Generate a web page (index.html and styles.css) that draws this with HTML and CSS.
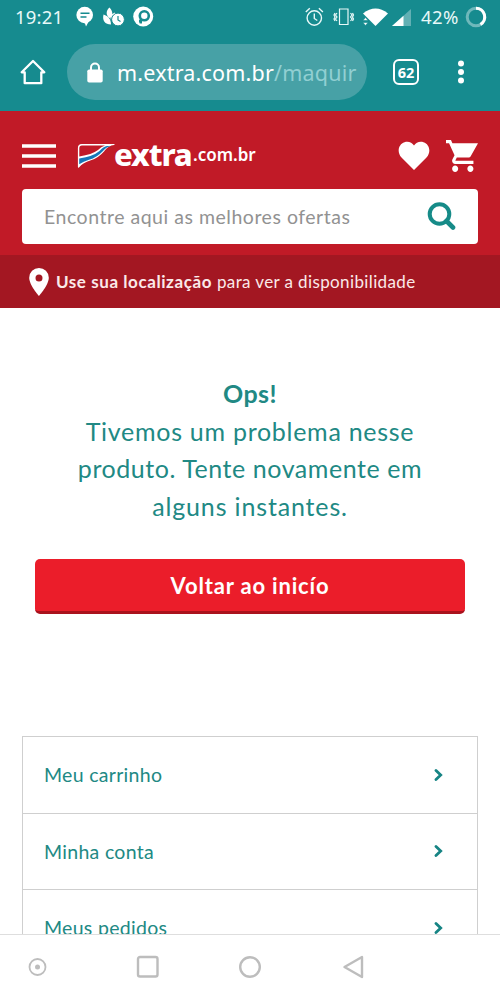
FILE: index.html
```
<!DOCTYPE html>
<html lang="pt-BR">
<head>
<meta charset="utf-8">
<title>Extra.com.br</title>
<link rel="stylesheet" href="styles.css">
</head>
<body>
<div class="phone">
  <div class="chrome">
    <div class="status">
      <span class="time">19:21</span>
      <svg class="notices" width="78" height="22" viewBox="0 0 78 22" fill="#fff">
        <circle cx="8.700" cy="9" r="8.300"/><path d="M5 15h8l-3 5.500-1-3z"/>
        <path d="M4.500 7.200h9M4.500 11h6" stroke="#168b8f" stroke-width="1.400"/>
        <path d="M33.500 1.500c-4 3.500-3.500 8 0 10.500 3-1 4.500-5.500 0-10.500zM27.500 8.500c-1.500 6 1.500 10 7.500 10 0-5-2.500-8.500-7.500-10zM39 6.500c-3 1-4.500 3.500-4.500 7l5-3z"/>
        <circle cx="42" cy="13.500" r="6.400" stroke="#168b8f"/><path d="M42 10v4l2.500 1.500" fill="none" stroke="#168b8f" stroke-width="1.200"/>
        <circle cx="67.200" cy="10.500" r="10"/><circle cx="68.300" cy="9.800" r="4.500" fill="none" stroke="#168b8f" stroke-width="2.600"/><path d="M64.800 13v4.500M63 15.300h2" stroke="#168b8f" stroke-width="2.400"/>
      </svg>
      <svg class="signals" width="108" height="22" viewBox="0 0 108 22" fill="none" stroke="#e8f8f8" stroke-width="1.400">
        <circle cx="9.300" cy="12" r="7.200"/><path d="M9.300 7.500v5l3 2M.8 6l4-3.800M17.900 6l-4-3.800"/>
        <path d="M34.500 3h8.500v15.500h-8.500zM32 7l-1.500 2 1.500 2-1.500 2 1.500 2M45.500 7l1.500 2-1.500 2 1.500 2-1.500 2M30 7l-1 2 1 2-1 2 1 2M47.500 7l1 2-1 2 1 2-1 2" stroke-width="1.200"/>
        <path d="M58 7.500q12.500-10 25 0L70.500 20z" fill="#fff" stroke="none"/>
        <path d="M58 14.500l2.500-3 2.500 3zM58 16.500l2.500 3 2.500-3z" fill="#fff" stroke="#168b8f" stroke-width=".6"/>
        <path d="M106 3v17H87z" fill="#62b0b4" stroke="none"/><path d="M98.500 9.700V20H87z" fill="#fff" stroke="none"/>
      </svg>
      <span class="battery">42%</span>
      <svg class="ring" width="22" height="22" viewBox="0 0 22 22" fill="none" stroke-width="3"><circle cx="11" cy="11" r="8.800" stroke="#6fb8bb"/><path d="M11 2.200a8.800 8.800 0 0 1 4.500 16.300" stroke="#fff"/></svg>
    </div>
    <div class="toolbar">
      <svg width="26" height="26" viewBox="0 0 26 26" fill="none" stroke="#fff" stroke-width="2.300" stroke-linejoin="round" stroke-linecap="round"><path d="M1.700 13.300L13 2l11.300 11.300h-3v10.900H4.700V13.300z"/></svg>
      <div class="address">
        <svg width="16" height="21" viewBox="0 0 16 21"><rect x=".3" y="7.500" width="15.400" height="13" rx="1.800" fill="#fff"/><path d="M4 8V5.500a4 4 0 0 1 8 0V8" fill="none" stroke="#fff" stroke-width="2"/></svg>
        <span class="url">m.extra.com.br<span class="path">/maquir</span></span>
      </div>
      <span class="tabs">62</span>
      <svg class="dots" width="8" height="24" viewBox="0 0 8 24" fill="#fff"><circle cx="4" cy="3.500" r="3"/><circle cx="4" cy="12" r="3"/><circle cx="4" cy="20.500" r="3"/></svg>
    </div>
  </div>

  <header class="header">
    <div class="brandbar">
      <svg width="34" height="24" viewBox="0 0 34 24" stroke="#fff" stroke-width="3.600"><path d="M0 2h34M0 12h34M0 22h34"/></svg>
      <div class="logo">
        <svg width="38" height="26" viewBox="0 0 38 26"><path d="M1.500 24V5q0-3.500 3.500-3.500h32q-6 .5-10 6-6 7-14 9.500-7 2-11.500 7z" fill="#fff" stroke="#fff" stroke-width="1.200" stroke-linejoin="round"/><path d="M2.300 13.500V5.200q0-2.700 2.700-2.700h23q-4 1-7 4.500-6 4.500-18.700 6.500z" fill="#c11a27"/><path d="M2.200 15.500Q16 13.500 22.500 8q4-4.500 7.500-5h4q-5 1-8 5-6 6.500-14 8.800-5.500 1.700-9.800 4.500z" fill="#1677b8"/></svg>
        <span class="name">extra</span><span class="domain">.com.br</span>
      </div>
      <svg class="heart" width="32" height="30" viewBox="0 0 32 30" fill="#fff"><path d="M16 29L3.500 16.500C-1.500 11 .5 3 6.500 1.200 10.500 0 14 1.500 16 4.500 18 1.500 21.500 0 25.500 1.200 31.500 3 33.500 11 28.500 16.500z"/></svg>
      <svg width="32" height="32" viewBox="1 2 21 20" preserveAspectRatio="none" fill="#fff"><path d="M7 18c-1.100 0-1.990.9-1.990 2S5.900 22 7 22s2-.9 2-2-.9-2-2-2zM1 2v2h2l3.600 7.590-1.350 2.450c-.16.28-.25.610-.25.960 0 1.100.9 2 2 2h12v-2H7.420c-.14 0-.25-.11-.25-.25l.03-.12.900-1.630h7.450c.75 0 1.410-.41 1.750-1.030L22 4H5.210l-.94-2H1zm16 16c-1.100 0-1.990.9-1.990 2s.89 2 1.990 2 2-.9 2-2-.9-2-2-2z"/></svg>
    </div>
    <div class="search">
      <span class="hint">Encontre aqui as melhores ofertas</span>
      <svg width="29" height="29" viewBox="0 0 29 29" fill="none" stroke="#168b88"><circle cx="12.500" cy="12" r="9.800" stroke-width="4"/><path d="M19.500 19l6.500 6.500" stroke-width="4.600" stroke-linecap="round"/></svg>
    </div>
  </header>
  <div class="location">
    <svg width="20" height="28" viewBox="0 0 20 28"><path fill="#fff" fill-rule="evenodd" d="M10 0a9.800 9.800 0 0 0-9.800 9.800C.2 17 10 28 10 28s9.800-11 9.800-18.200A9.800 9.800 0 0 0 10 0zm0 6.500a3.500 3.500 0 1 1 0 7 3.500 3.500 0 0 1 0-7z"/></svg>
    <span><b>Use sua localização</b> <span class="reason">para ver a disponibilidade</span></span>
  </div>

  <main class="content">
    <p class="message"><b>Ops!</b><br><span class="l1">Tivemos um problema nesse</span><br><span class="l2">produto. Tente novamente em</span><br><span class="l3">alguns instantes.</span></p>
    <div class="button">Voltar ao inicío</div>
    <nav class="links">
      <div class="link"><span>Meu carrinho</span><svg width="10" height="12" viewBox="0 0 10 12"><path d="M2 1.500L6.700 6 2 10.500" /></svg></div>
      <div class="link"><span>Minha conta</span><svg width="10" height="12" viewBox="0 0 10 12"><path d="M2 1.500L6.700 6 2 10.500" /></svg></div>
      <div class="link"><span>Meus pedidos</span><svg width="10" height="12" viewBox="0 0 10 12"><path d="M2 1.500L6.700 6 2 10.500" /></svg></div>
    </nav>
  </main>

  <div class="navbar">
    <svg width="340" height="26" viewBox="0 0 340 26" fill="none" stroke="#bdbdbd" stroke-width="2.400" stroke-linejoin="round"><circle cx="10.500" cy="13" r="8" stroke-width="1.800"/><circle cx="10.500" cy="13" r="2.500" fill="#bdbdbd" stroke="none"/><rect x="111" y="3" width="19.500" height="19.500" rx="2"/><circle cx="223" cy="13" r="9.800"/><path d="M317.500 13L335 3v20z"/></svg>
  </div>
</div>
</body>
</html>
```
FILE: styles.css
```
* { box-sizing: border-box; }
body { margin: 0; background: #fff; font-family: Lato, sans-serif; }
svg { display: block; flex: none; }
.phone { width: 500px; height: 1000px; display: flex; flex-direction: column; overflow: hidden; }
.phone > * { flex: none; }

.chrome { height: 111px; background: #168b8f; color: #fff; font-family: "Noto Sans", sans-serif; white-space: nowrap; }
.status { height: 33px; display: flex; align-items: center; padding-left: 15px; }
.time { width: 61px; font-size: 18.500px; letter-spacing: .2px; color: #e8f8f8; }
.notices { margin-top: 1px; }
.signals { margin-left: 151px; }
.battery { width: 44px; margin-left: 8px; font-size: 18.500px; letter-spacing: .4px; color: #e8f8f8; }
.toolbar { height: 78px; display: flex; align-items: center; padding: 0 0 0 20px; }
.address { width: 300px; height: 56px; margin-left: 21px; padding-left: 20px; border-radius: 28px; background: #47a1a6; display: flex; align-items: center; gap: 14px; }
.url { font-size: 21.500px; letter-spacing: .2px; }
.path { color: #91cfd2; }
.tabs { width: 26px; height: 26px; margin-left: 26px; border: 2.500px solid #fff; border-radius: 6px; display: flex; align-items: center; justify-content: center; font-size: 14.500px; font-weight: 700; }
.dots { margin-left: 38px; }

.header { height: 144px; background: #c11a27; padding: 28px 22px 0; }
.brandbar { height: 34px; display: flex; align-items: center; }
.logo { width: 320px; margin-left: 21px; display: flex; align-items: center; color: #fff; font-family: "Noto Sans", sans-serif; }
.name { width: 79px; margin: -5px 0 0 -1px; font-size: 31px; font-weight: 800; line-height: 30px; letter-spacing: -1.100px; }
.domain { font-size: 17px; font-weight: 600; line-height: 30px; margin-top: -2px; }
.heart { margin: 0 16px 0 1px; }
.search { height: 55px; margin-top: 16px; padding: 0 22px; border-radius: 4px; background: #fff; display: flex; align-items: center; justify-content: space-between; }
.hint { font-size: 19.500px; letter-spacing: .52px; color: #929292; }
.location { height: 53px; padding-left: 29px; background: #a31722; color: #fbe9e9; display: flex; align-items: center; gap: 7px; font-size: 17px; white-space: nowrap; letter-spacing: .57px; }
.reason { letter-spacing: .38px; }

.content { height: 626px; padding: 67px 22px 0; overflow: hidden; color: #218984; }
.message { margin: 0; font-size: 25px; line-height: 37.500px; text-align: center; white-space: nowrap; letter-spacing: .5px; }
.l1 { letter-spacing: .72px; }
.l2 { letter-spacing: .56px; }
.l3 { letter-spacing: .85px; }
.button { height: 55px; margin: 34px 13px 0; border-radius: 5px; border-bottom: 3px solid #a9121d; background: #eb1d2a; color: #fff; font-size: 22px; font-weight: 700; line-height: 53px; text-align: center; letter-spacing: .82px; }
.links { margin-top: 122px; border: 1px solid #cfcfcf; border-width: 1px 1px 0; }
.link { height: 76.500px; padding: 0 33px 0 21px; border-bottom: 1px solid #cfcfcf; display: flex; align-items: center; justify-content: space-between; font-size: 19.500px; letter-spacing: .3px; }
.link path { fill: none; stroke: #168484; stroke-width: 2.800; stroke-linecap: round; }
.navbar { height: 66px; border-top: 1px solid #dedede; padding: 19px 0 0 27px; background: #fff; }
```
